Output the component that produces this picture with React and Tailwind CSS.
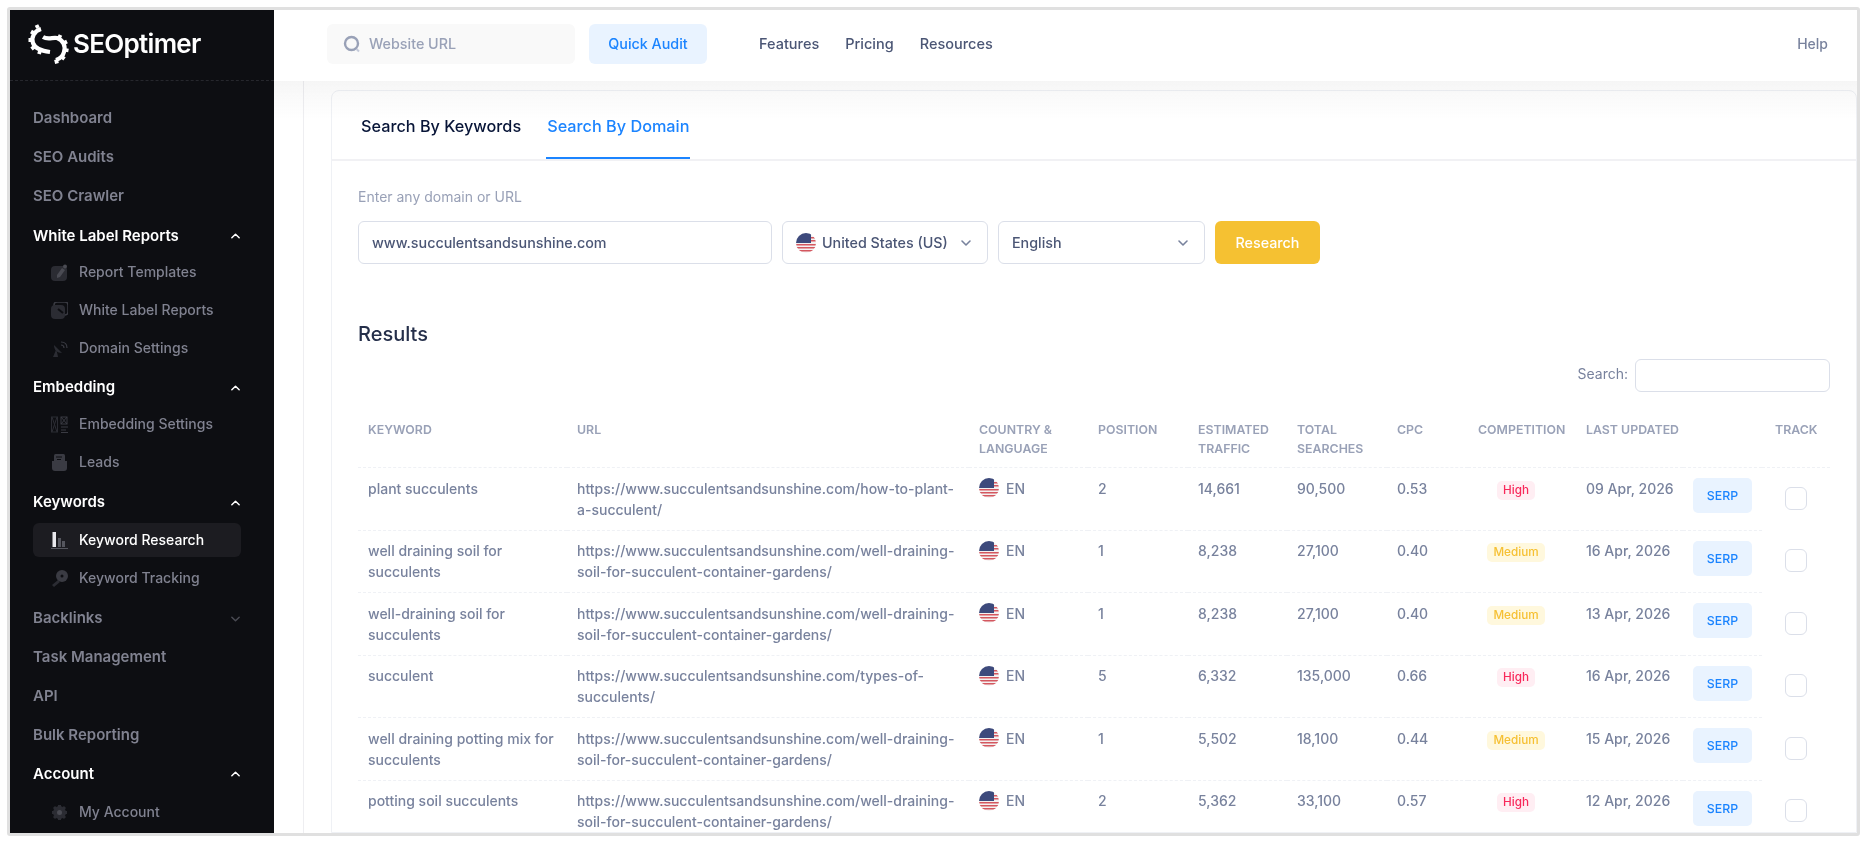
import React, { useId } from 'react';

const Chevron = ({ up, className }) => (
  <svg viewBox="0 0 12 8" fill="none" stroke="currentColor" strokeWidth="1.6" className={className}>
    <path d={up ? 'M2 6l4-4 4 4' : 'M2 2l4 4 4-4'} strokeLinecap="round" strokeLinejoin="round" />
  </svg>
);

const Flag = () => {
  const id = useId();
  return (
    <svg viewBox="0 0 20 20" className="w-5 h-5 shrink-0">
      <clipPath id={id}><ellipse cx="10" cy="10" rx="10" ry="10" /></clipPath>
      <g clipPath={`url(#${id})`}>
        <rect width="20" height="20" fill="#f4f1f1" />
        <rect y="11" width="20" height="1.5" fill="#d4575f" />
        <rect y="14" width="20" height="1.5" fill="#d4575f" />
        <rect y="17" width="20" height="1.5" fill="#d4575f" />
        <rect y="4" x="14" width="6" height="1.5" fill="#d4575f" />
        <rect y="7" x="14" width="6" height="1.5" fill="#d4575f" />
        <rect width="15" height="10" fill="#3d4a7c" />
      </g>
    </svg>
  );
};

const Logo = () => (
  <svg viewBox="0 0 42 44" className="w-[42px] h-11 shrink-0" fill="none" stroke="#fff" strokeWidth="4.2">
    <path d="M13 7C6 9 3 16 5 21c2 6 9 8 17 9" />
    <path d="M15 15c5 3 10 0 14 1 6 2 9 8 7 14-1 4-5 7-8 8" />
    <g strokeWidth="3.8" strokeLinecap="butt">
      <path d="M10 6L8.500 3M5.500 11L3 9.500M3.500 18H.5M6 25l-2.500 2M12 29l-1 3" />
      <path d="M31 16l1.500-3M36 21l3-1.500M37.500 28l3 .5M34 35l2.500 2M28 37.500l1 4" />
    </g>
  </svg>
);

const ICON_DARK = '#2b2c33';
const ICON_LIGHT = '#3a3b43';

const icons = {
  pencil: (
    <>
      <rect x="0" y="2" width="16" height="15" rx="4" fill={ICON_DARK} />
      <path d="M6 11l5-7 3 2-5 7-3 1z" fill="#4a4b53" />
      <circle cx="14" cy="2.5" r="2" fill="#4a4b53" />
    </>
  ),
  report: (
    <>
      <rect x="3" y="0" width="14" height="13" rx="3" fill="none" stroke={ICON_LIGHT} strokeWidth="1.5" />
      <rect x="0" y="3" width="14" height="14" rx="4" fill={ICON_DARK} />
      <path d="M7 7l5 4" stroke="#0d0e12" strokeWidth="2" />
    </>
  ),
  dish: (
    <>
      <path d="M3 5c0 5 3 8 8 8z" fill={ICON_DARK} />
      <path d="M5 10l-3 7h5l-1-5z" fill={ICON_DARK} />
      <path d="M10 5c2 0 3 1 3 3M10 2c4 0 6 2 6 6" stroke={ICON_LIGHT} strokeWidth="1.2" fill="none" />
    </>
  ),
  embed: (
    <>
      <rect x="0.5" y="1" width="6" height="15" fill="none" stroke={ICON_DARK} />
      <path d="M1 1l5 15M6 1L1 16" stroke={ICON_DARK} />
      <rect x="10" y="1" width="6" height="7" fill="none" stroke={ICON_LIGHT} />
      <path d="M10 1l6 7M16 1l-6 7M10 11h7M10 14h5M10 16.500h7" stroke={ICON_LIGHT} />
    </>
  ),
  leads: (
    <>
      <rect x="3" y="0" width="11" height="8" rx="1.500" fill="#3a3b43" />
      <path d="M1 7h15v7a3 3 0 0 1-3 3H4a3 3 0 0 1-3-3z" fill="#3a3b43" />
      <path d="M5 3h6M6 5.500h4" stroke="#0d0e12" />
    </>
  ),
  bars: (
    <>
      <rect x="1.500" y="0" width="3.500" height="15" fill="#e8e8ec" />
      <rect x="7" y="6" width="3" height="9" fill="#55565e" />
      <rect x="11" y="9" width="3" height="6" fill="#55565e" />
      <rect x="0" y="16" width="17" height="1" fill="#55565e" />
    </>
  ),
  key: (
    <>
      <circle cx="11" cy="6" r="6" fill={ICON_LIGHT} />
      <circle cx="11" cy="6" r="1.500" fill="#0d0e12" />
      <path d="M7 10l-6 5 2 2 6-5z" fill={ICON_DARK} />
    </>
  ),
  gear: (
    <>
      <circle cx="8.500" cy="8.500" r="6.500" fill={ICON_DARK} />
      <path d="M8.500 1v15M1 8.500h15M3 3l11 11M14 3L3 14" stroke={ICON_DARK} strokeWidth="3" />
      <circle cx="8.500" cy="8.500" r="2.500" fill="#4a4b53" />
    </>
  ),
};

const MainItem = ({ children, className = '' }) => (
  <div className={`h-[39px] flex items-center pl-[23px] text-[15px] font-semibold text-[#808290] ${className}`}>{children}</div>
);

const Heading = ({ children, open = true, className = 'h-[38px] pt-[3px]' }) => (
  <div className={`${className} flex items-center justify-between pl-[23px] pr-[33px] text-[15px] font-semibold ${open ? 'text-white' : 'text-[#808290]'}`}>
    <span>{children}</span>
    <Chevron up={open} className={`w-[11px] h-2 ${open ? 'text-white' : 'text-[#4a4b53]'}`} />
  </div>
);

const SubItem = ({ icon, children, active }) => (
  <div className="h-[38px] flex items-center pl-[23px] pr-[33px]">
    <div className={`flex-1 h-[34px] flex items-center gap-[11px] pl-[18px] rounded-md text-sm font-medium ${active ? 'bg-[#1c1c21] text-white' : 'text-[#808290]'}`}>
      <svg viewBox="0 0 17 17" className="w-[17px] h-[17px] shrink-0">{icons[icon]}</svg>
      <span>{children}</span>
    </div>
  </div>
);

const Sidebar = () => (
  <aside className="w-[264px] shrink-0 bg-[#0d0e12] flex flex-col">
    <div className="h-[71px] shrink-0 flex items-center gap-[3px] pl-[18px] pb-[3px] border-b border-dashed border-[#26272d]">
      <Logo />
      <span className="text-[26px] font-semibold text-white tracking-[-0.7px] leading-none">SEOptimer</span>
    </div>
    <nav className="pt-[18px]">
      <MainItem>Dashboard</MainItem>
      <MainItem>SEO Audits</MainItem>
      <MainItem>SEO Crawler</MainItem>
      <Heading className="h-[37px] pt-[3px]">White Label Reports</Heading>
      <SubItem icon="pencil">Report Templates</SubItem>
      <SubItem icon="report">White Label Reports</SubItem>
      <SubItem icon="dish">Domain Settings</SubItem>
      <Heading>Embedding</Heading>
      <SubItem icon="embed">Embedding Settings</SubItem>
      <SubItem icon="leads">Leads</SubItem>
      <Heading className="h-10 pt-[3px]">Keywords</Heading>
      <SubItem icon="bars" active>Keyword Research</SubItem>
      <SubItem icon="key">Keyword Tracking</SubItem>
      <Heading open={false} className="h-10 pt-[3px]">Backlinks</Heading>
      <MainItem className="mt-px">Task Management</MainItem>
      <MainItem>API</MainItem>
      <MainItem>Bulk Reporting</MainItem>
      <Heading className="h-[38px]">Account</Heading>
      <SubItem icon="gear">My Account</SubItem>
    </nav>
  </aside>
);

const Topbar = () => (
  <header className="h-[71px] shrink-0 bg-white flex items-center pl-[53px] pr-[29px] pb-[3px] text-[14.3px] font-medium">
    <div className="w-[248px] h-10 rounded-md bg-[#f9f9f9] flex items-center pl-4 gap-2">
      <svg viewBox="0 0 18 18" className="w-[18px] h-[18px] shrink-0" fill="none">
        <circle cx="8.500" cy="8.500" r="6.500" stroke="#99A1B7" strokeWidth="2.400" />
        <path d="M13.500 14l2.500 2.500" stroke="#c4cada" strokeWidth="2" />
      </svg>
      <input placeholder="Website URL" className="flex-1 min-w-0 bg-transparent outline-none font-medium placeholder:text-[#99A1B7]" />
    </div>
    <button className="ml-[14px] w-[118px] h-10 rounded-md bg-[#E9F3FF] text-[#1B84FF]">Quick Audit</button>
    <nav className="ml-[52px] flex gap-[26px] text-[14.5px] text-[#4B5675]">
      <span>Features</span>
      <span>Pricing</span>
      <span>Resources</span>
    </nav>
    <span className="ml-auto text-sm text-[#78829D]">Help</span>
  </header>
);

const rows = [
  ['plant succulents', 'https://www.succulentsandsunshine.com/how-to-plant-a-succulent/', 2, '14,661', '90,500', '0.53', 'High', '09 Apr, 2026'],
  ['well draining soil for succulents', 'https://www.succulentsandsunshine.com/well-draining-soil-for-succulent-container-gardens/', 1, '8,238', '27,100', '0.40', 'Medium', '16 Apr, 2026'],
  ['well-draining soil for succulents', 'https://www.succulentsandsunshine.com/well-draining-soil-for-succulent-container-gardens/', 1, '8,238', '27,100', '0.40', 'Medium', '13 Apr, 2026'],
  ['succulent', 'https://www.succulentsandsunshine.com/types-of-succulents/', 5, '6,332', '135,000', '0.66', 'High', '16 Apr, 2026'],
  ['well draining potting mix for succulents', 'https://www.succulentsandsunshine.com/well-draining-soil-for-succulent-container-gardens/', 1, '5,502', '18,100', '0.44', 'Medium', '15 Apr, 2026'],
  ['potting soil succulents', 'https://www.succulentsandsunshine.com/well-draining-soil-for-succulent-container-gardens/', 2, '5,362', '33,100', '0.57', 'High', '12 Apr, 2026'],
];

const Th = ({ children, className = 'pl-[10px]' }) => (
  <th className={`pt-0 pb-[9px] pr-[10px] text-left align-top text-[12.35px] leading-[18.5px] font-semibold uppercase text-[#99A1B7] border-b border-dashed border-[#eff1f5] ${className}`}>{children}</th>
);

const Td = ({ children, className = '' }) => (
  <td className={`py-[9.75px] px-[10px] align-top border-b border-dashed border-[#eff1f5] ${className}`}>{children}</td>
);

const ResultsTable = () => (
  <table className="mt-[29px] w-[1472px] table-fixed border-collapse text-sm leading-[21px] font-medium text-[#78829D]">
    <colgroup>
      <col className="w-[209px]" />
      <col className="w-[402px]" />
      <col className="w-[119px]" />
      <col className="w-[100px]" />
      <col className="w-[99px]" />
      <col className="w-[100px]" />
      <col className="w-[81px]" />
      <col className="w-[108px]" />
      <col className="w-[107px]" />
      <col className="w-[79px]" />
      <col className="w-[68px]" />
    </colgroup>
    <thead>
      <tr>
        <Th>Keyword</Th>
        <Th>URL</Th>
        <Th>Country &amp; Language</Th>
        <Th>Position</Th>
        <Th>Estimated Traffic</Th>
        <Th>Total Searches</Th>
        <Th>CPC</Th>
        <Th className="pl-[10px] whitespace-nowrap">Competition</Th>
        <Th className="pl-[10px] whitespace-nowrap">Last Updated</Th>
        <Th />
        <Th className="pl-[13px]">Track</Th>
      </tr>
    </thead>
    <tbody>
      {rows.map((row, i) => (
        <tr key={i}>
          <Td>{row[0]}</Td>
          <Td>{row[1]}</Td>
          <Td>
            <div className="flex items-center gap-[7px]">
              <Flag />
              <span>EN</span>
            </div>
          </Td>
          <Td>{row[2]}</Td>
          <Td>{row[3]}</Td>
          <Td>{row[4]}</Td>
          <Td>{row[5]}</Td>
          <Td className="pr-[22px]">
            <div className="flex justify-center pt-[3px]">
              <span className={`h-[19px] px-[6px] rounded-[5px] flex items-center text-[11.7px] ${row[6] === 'High' ? 'bg-[#FFEEF3] text-[#F8285A]' : 'bg-[#FFF8DD] text-[#F6C033]'}`}>{row[6]}</span>
            </div>
          </Td>
          <Td className="whitespace-nowrap">{row[7]}</Td>
          <Td className="pt-[10px]">
            <button className="w-[59px] h-[35px] rounded-[5px] bg-[#E9F3FF] text-[12.35px] font-medium text-[#1B84FF]">SERP</button>
          </Td>
          <td className="pt-[19px] align-top">
            <div className="mx-auto w-[22px] h-[23px] rounded-md border border-[#DBDFE9] bg-white" />
          </td>
        </tr>
      ))}
    </tbody>
  </table>
);

const Card = () => (
  <div className="bg-white border border-[#eff1f5] rounded-t-lg flex-1 min-w-0">
    <div className="h-[70px] border-b-2 border-[#f1f1f4] flex items-end gap-[25px] pl-[29px] text-[16.25px] leading-6 font-medium">
      <span className="h-[45px] text-[#071437]">Search By Keywords</span>
      <span className="h-[45px] px-px border-b-2 border-[#1B84FF] text-[#1B84FF]">Search By Domain</span>
    </div>
    <div className="px-[26px]">
      <p className="mt-[25px] text-sm leading-[21px] text-[#99A1B7]">Enter any domain or URL</p>
      <div className="mt-[14px] flex gap-[10px] h-[43px] text-[14.3px] font-medium text-[#4B5675]">
        <input readOnly value="www.succulentsandsunshine.com" className="w-[414px] h-full rounded-md border border-[#DBDFE9] px-[13px] outline-none font-medium" />
        <div className="w-[206px] rounded-md border border-[#DBDFE9] flex items-center pl-[13px] pr-[15px]">
          <Flag />
          <span className="ml-[6px] flex-1">United States (US)</span>
          <Chevron className="w-3 h-2 text-[#78829D]" />
        </div>
        <div className="w-[207px] rounded-md border border-[#DBDFE9] flex items-center pl-[13px] pr-[15px]">
          <span className="flex-1">English</span>
          <Chevron className="w-3 h-2 text-[#78829D]" />
        </div>
        <button className="w-[105px] rounded-md bg-[#F5C132] text-white font-medium">Research</button>
      </div>
      <h2 className="mt-[57px] text-[20px] leading-[27px] font-medium text-[#252F4A]">Results</h2>
      <div className="mt-[11px] flex items-center justify-end gap-[7px] text-sm text-[#78829D]">
        <label className="pb-[3px]">Search:</label>
        <input className="w-[195px] h-[33px] rounded-md border border-[#DBDFE9] outline-none" />
      </div>
      <ResultsTable />
    </div>
  </div>
);

export default function App() {
  return (
    <div className="h-screen bg-white p-[7px] font-[Inter,sans-serif] overflow-hidden">
      <div className="w-[1853px] h-[829px] border-[3px] border-[#e0e0e0] rounded-[3px] flex overflow-hidden">
        <Sidebar />
        <div className="flex-1 min-w-0 flex flex-col bg-white">
          <Topbar />
          <div className="relative flex-1 min-h-0 pl-[29px] overflow-hidden">
            <div className="h-full border-l border-[#eeeef1] pl-[27px] pt-[9px] flex">
              <Card />
            </div>
            <div className="absolute inset-x-0 top-0 h-[38px] bg-gradient-to-b from-[#f6f6f6] to-transparent mix-blend-multiply pointer-events-none" />
          </div>
        </div>
      </div>
    </div>
  );
}
